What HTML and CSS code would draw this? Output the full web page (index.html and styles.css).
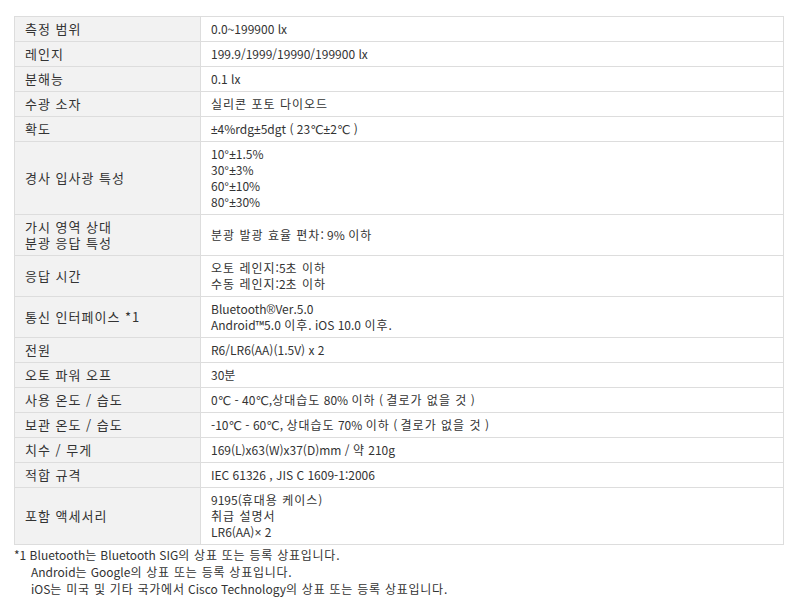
FILE: index.html
```html
<!DOCTYPE html>
<html lang="ko">
<head>
<meta charset="utf-8">
<link rel="stylesheet" href="styles.css">
</head>
<body>
<div class="page">
<table class="spec">
<tbody>
<tr><th>측정 범위</th><td>0.0~199900 lx</td></tr>
<tr><th>레인지</th><td>199.9/1999/19990/199900 lx</td></tr>
<tr><th>분해능</th><td>0.1 lx</td></tr>
<tr><th>수광 소자</th><td><span class="k">실리콘 포토 다이오드</span></td></tr>
<tr><th>확도</th><td><span class="s">±</span>4%rdg<span class="s">±</span>5dgt ( 23<span class="s">℃±</span>2<span class="s">℃</span> )</td></tr>
<tr><th>경사 입사광 특성</th><td>10<span class="s">°±</span>1.5%<br>30<span class="s">°±</span>3%<br>60<span class="s">°±</span>10%<br>80<span class="s">°±</span>30%</td></tr>
<tr><th>가시 영역 상대<br>분광 응답 특성</th><td><span class="k">분광 발광 효율 편차</span>: 9% <span class="k">이하</span></td></tr>
<tr><th>응답 시간</th><td><span class="k">오토 레인지</span>:5<span class="k">초 이하</span><br><span class="k">수동 레인지</span>:2<span class="k">초 이하</span></td></tr>
<tr><th>통신 인터페이스 *1</th><td>Bluetooth<span class="s">®</span>Ver.5.0<br>Android™5.0 <span class="k">이후</span>. iOS 10.0 <span class="k">이후</span>.</td></tr>
<tr><th>전원</th><td>R6/LR6(AA)(1.5V) x 2</td></tr>
<tr><th>오토 파워 오프</th><td>30<span class="k">분</span></td></tr>
<tr><th>사용 온도 / 습도</th><td>0<span class="s">℃</span> - 40<span class="s">℃</span>,<span class="k">상대습도</span> 80% <span class="k">이하</span> ( <span class="k">결로가 없을 것</span> )</td></tr>
<tr><th>보관 온도 / 습도</th><td>-10<span class="s">℃</span> - 60<span class="s">℃</span>, <span class="k">상대습도</span> 70% <span class="k">이하</span> ( <span class="k">결로가 없을 것</span> )</td></tr>
<tr><th>치수 / 무게</th><td>169(L)x63(W)x37(D)mm / <span class="k">약</span> 210g</td></tr>
<tr><th>적합 규격</th><td>IEC 61326 , JIS C 1609-1:2006</td></tr>
<tr><th>포함 액세서리</th><td>9195(<span class="k">휴대용 케이스</span>)<br><span class="k">취급 설명서</span><br>LR6(AA)<span class="s">×</span> 2</td></tr>
</tbody>
</table>
<div class="notes">
<p class="note first">*1 Bluetooth<span class="k">는</span> Bluetooth SIG<span class="k">의 상표 또는 등록 상표입니다</span>.</p>
<p class="note">Android<span class="k">는</span> Google<span class="k">의 상표 또는 등록 상표입니다</span>.</p>
<p class="note">iOS<span class="k">는 미국 및 기타 국가에서</span> Cisco Technology<span class="k">의 상표 또는 등록 상표입니다</span>.</p>
</div>
</div>
</body>
</html>
```

FILE: styles.css
```css
html, body {
  margin: 0;
  padding: 0;
  background: #ffffff;
}
body {
  font-family: "Noto Sans CJK KR", "Noto Sans", sans-serif;
  font-size: 12px;
  color: #333333;
}
.page {
  padding: 16px 18px 0 14px;
}
.spec {
  width: 770px;
  border-collapse: collapse;
  border: 1px solid #dddddd;
}
.spec th,
.spec td {
  border: 1px solid #dddddd;
  padding: 4px 10px;
  line-height: 16px;
  vertical-align: middle;
  text-align: left;
  font-weight: normal;
}
.spec th {
  width: 165px;
  background: #f2f2f2;
  color: #333333;
  font-size: 13px;
  letter-spacing: 1px;
}
.spec td {
  background: #ffffff;
}
.k {
  letter-spacing: 1px;
}
.s {
  font-family: "Liberation Sans", "DejaVu Sans", sans-serif;
  line-height: 1;
}
.notes {
  padding-top: 1px;
}
.note {
  margin: 0;
  line-height: 17px;
  padding-left: 17px;
}
.note.first {
  padding-left: 0;
}
.note .k {
  letter-spacing: 0.75px;
}
```
